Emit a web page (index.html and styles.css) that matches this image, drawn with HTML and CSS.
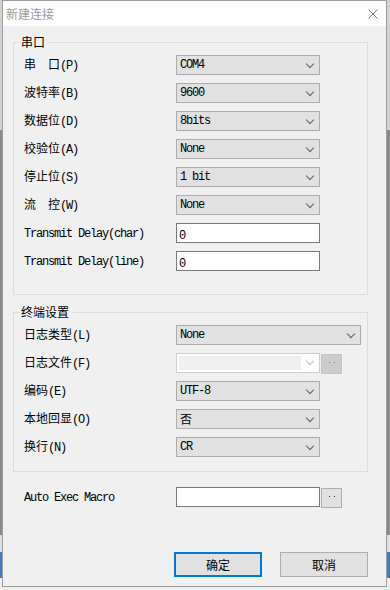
FILE: index.html
```html
<!DOCTYPE html>
<html lang="zh-CN">
<head>
<meta charset="UTF-8">
<title>新建连接</title>
<link rel="stylesheet" href="styles.css">
</head>
<body>

<div class="window">
    <!-- title bar -->
    <div class="titlebar">
        <span class="title">新建连接</span>
        <svg class="close" viewBox="0 0 10 10">
            <path d="M0.5 0.5L9.5 9.5M9.5 0.5L0.5 9.5" stroke="#777" stroke-width="1" fill="none"/>
        </svg>
    </div>

    <div class="content">
        <!-- serial port -->
        <fieldset class="group serial">
            <legend>串口</legend>
            <div class="rows">
                <div class="row"><label>串　口<span class="en">(P)</span></label><div class="combo"><span class="val">COM4</span></div></div>
                <div class="row"><label>波特率<span class="en">(B)</span></label><div class="combo"><span class="val">9600</span></div></div>
                <div class="row"><label>数据位<span class="en">(D)</span></label><div class="combo"><span class="val">8bits</span></div></div>
                <div class="row"><label>校验位<span class="en">(A)</span></label><div class="combo"><span class="val">None</span></div></div>
                <div class="row"><label>停止位<span class="en">(S)</span></label><div class="combo"><span class="val">1 bit</span></div></div>
                <div class="row"><label>流　控<span class="en">(W)</span></label><div class="combo"><span class="val">None</span></div></div>
                <div class="row"><label><span class="en">Transmit Delay(char)</span></label><div class="input"><span class="val">0</span></div></div>
                <div class="row"><label><span class="en">Transmit Delay(line)</span></label><div class="input"><span class="val">0</span></div></div>
            </div>
        </fieldset>

        <!-- terminal settings -->
        <fieldset class="group term">
            <legend>终端设置</legend>
            <div class="rows">
                <div class="row"><label>日志类型<span class="en">(L)</span></label><div class="combo wide"><span class="val">None</span></div></div>
                <div class="row"><label>日志文件<span class="en">(F)</span></label>
                    <div class="picker">
                        <div class="combo disabled"><span class="fill"></span></div>
                        <div class="dots disabled"><i></i><i></i></div>
                    </div>
                </div>
                <div class="row"><label>编码<span class="en">(E)</span></label><div class="combo"><span class="val">UTF-8</span></div></div>
                <div class="row"><label>本地回显<span class="en">(O)</span></label><div class="combo"><span class="val zh">否</span></div></div>
                <div class="row"><label>换行<span class="en">(N)</span></label><div class="combo"><span class="val">CR</span></div></div>
            </div>
        </fieldset>

        <!-- macro -->
        <div class="row macro">
            <label><span class="en">Auto Exec Macro</span></label>
            <div class="picker">
                <div class="input"></div>
                <div class="dots"><i></i><i></i></div>
            </div>
        </div>

        <div class="footer">
            <button class="btn primary">确定</button>
            <button class="btn">取消</button>
        </div>
    </div>
</div>

</body>
</html>
```

FILE: styles.css
```css
/* ===== base ===== */
*{box-sizing:border-box;margin:0;padding:0;}
body{
    width:390px;
    height:590px;
    overflow:hidden;
    background:linear-gradient(#d2d2d2 0 130px,#8a8a8a 130px 535px,#dedede 535px 552px,#3d7cc9 552px 578px,#f0f0f0 578px);
    font:12px/20px "Noto Sans CJK SC",sans-serif;
    color:#000;
}

/* ===== window ===== */
.window{
    margin-left:2px;
    width:385px;
    height:587px;
    border:1px solid #9d9d9d;
    background:#f0f0f0;
    display:flex;
    flex-direction:column;
}
.titlebar{
    height:25px;
    background:#fff;
    display:flex;
    align-items:center;
    justify-content:space-between;
    padding:0 8px 0 3px;
}
.title{color:#9a9a9a;font-size:12px;line-height:16px;}
.close{width:10px;height:10px;}

.content{
    flex:1;
    display:flex;
    flex-direction:column;
    padding:8px 0 9px 10px;
}

/* ===== group boxes ===== */
.group{
    width:355px;
    border:1px solid #dcdcdc;
    padding:4px 0 24px 10px;
}
.group legend{
    margin-left:-4px;
    padding:0 4px 0 1px;
    font-size:12px;
    line-height:16px;
}
.group.term{margin-top:9px;padding-bottom:15px;}
.rows{display:flex;flex-direction:column;gap:8px;}

.row{
    display:grid;
    grid-template-columns:152px auto;
    align-items:center;
    height:20px;
}
.row label{white-space:nowrap;}
.en{
    font-family:"Liberation Mono",monospace;
    font-size:12px;
    letter-spacing:-1.2px;
}

/* ===== controls ===== */
.combo{
    width:144px;
    height:20px;
    border:1px solid #adadad;
    background:#e1e1e1;
    display:flex;
    align-items:center;
    justify-content:space-between;
    padding:0 6px 0 3px;
}
.combo::after{
    content:'';
    width:5px;
    height:5px;
    border:solid #606060;
    border-width:0 1px 1px 0;
    transform:rotate(45deg);
    margin-top:-3px;
}
.combo.wide{width:185px;}
.combo.disabled{
    background:#fff;
    border-color:#cccccc;
    padding-left:2px;
}
.combo.disabled::after{border-color:#c4c4c4;}
.fill{width:122px;height:14px;background:#f0f0f0;}

.val{
    font-family:"Liberation Mono","Noto Sans CJK SC",monospace;
    font-size:12px;
    letter-spacing:-1.2px;
    line-height:18px;
}
.val.zh{font-family:"Noto Sans CJK SC",sans-serif;letter-spacing:0;}

.input{
    width:144px;
    height:20px;
    border:1px solid #7a7a7a;
    background:#fff;
    padding-left:2px;
}

.picker{display:flex;align-items:flex-start;}
.dots{
    width:21px;
    height:20px;
    margin:1px 0 0 1px;
    border:1px solid #adadad;
    background:#e1e1e1;
    display:flex;
    justify-content:center;
    align-items:center;
    gap:4px;
    padding-bottom:2px;
}
.dots i{width:1px;height:1px;background:#333;}
.dots.disabled{background:#cccccc;border-color:#c4c4c4;}
.dots.disabled i{background:#8a8a8a;}

.macro{margin-top:14px;padding-left:11px;}

/* ===== footer buttons ===== */
.footer{
    margin-top:auto;
    display:flex;
    justify-content:flex-end;
    gap:18px;
    padding-right:18px;
}
.btn{
    width:88px;
    height:25px;
    border:1px solid #adadad;
    background:#e1e1e1;
    font:12px/20px "Noto Sans CJK SC",sans-serif;
    color:#000;
}
.btn.primary{border:2px solid #0078d7;}
```
